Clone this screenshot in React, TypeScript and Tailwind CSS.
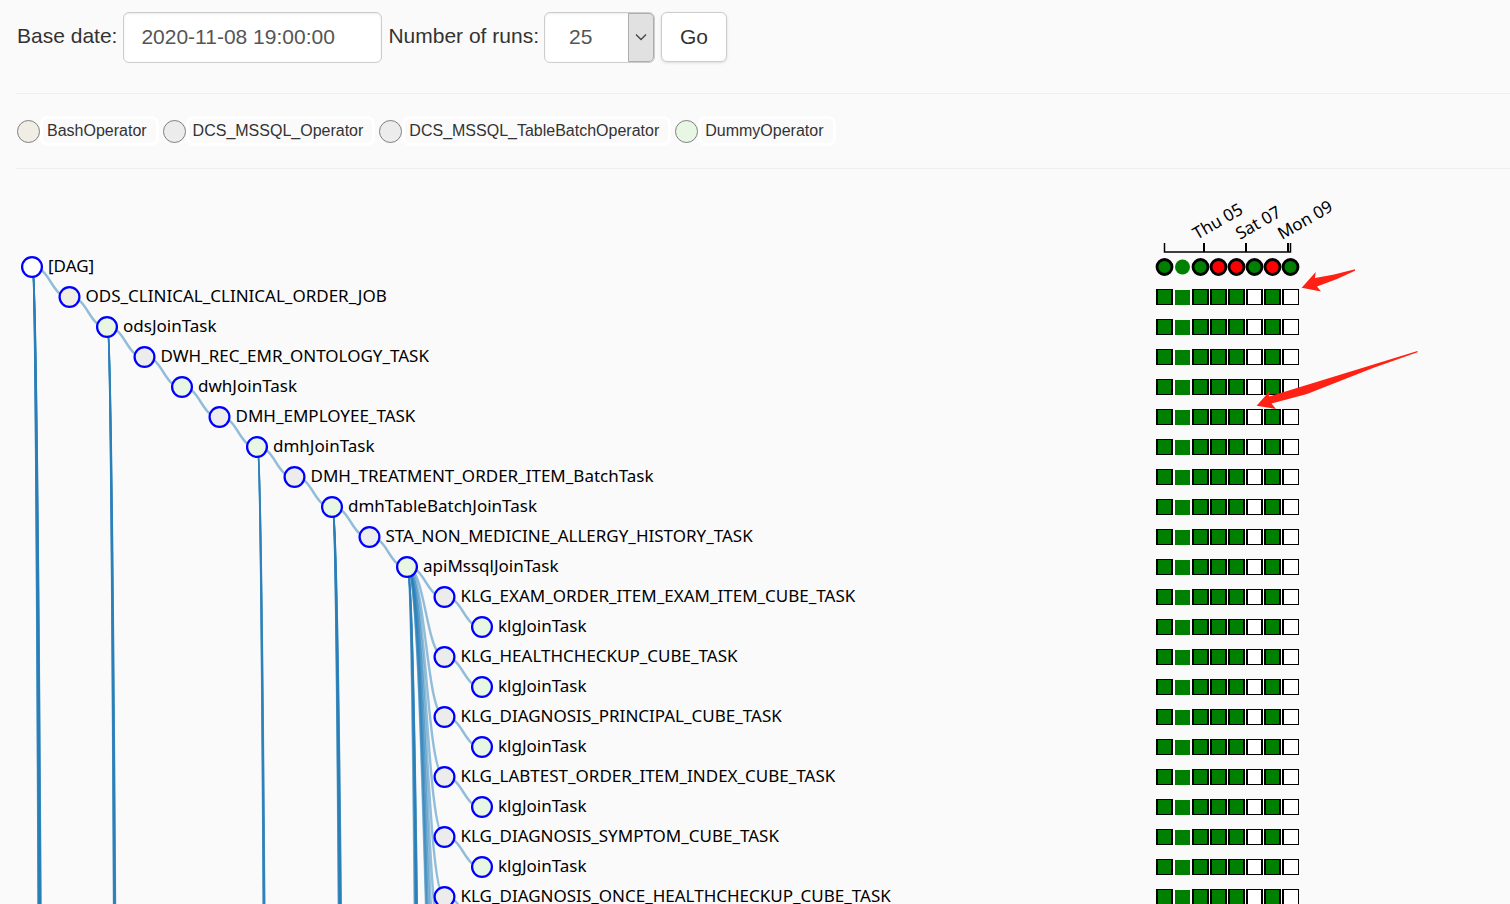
const STEP_X = 37.5;
const STEP_Y = 30;

const OPERATORS = [
  { name: 'BashOperator', swatch: 'bg-[#f0ede4]' },
  { name: 'DCS_MSSQL_Operator', swatch: 'bg-[#ececec]' },
  { name: 'DCS_MSSQL_TableBatchOperator', swatch: 'bg-[#ececec]' },
  { name: 'DummyOperator', swatch: 'bg-[#e8f7e4]' },
];

const BASH = '#f0ede4';
const MSSQL = '#ececec';
const DUMMY = '#e8f7e4';

type Task = { name: string; depth: number; fill: string };

const TASKS: Task[] = [
  { name: '[DAG]', depth: 0, fill: '#ffffff' },
  { name: 'ODS_CLINICAL_CLINICAL_ORDER_JOB', depth: 1, fill: BASH },
  { name: 'odsJoinTask', depth: 2, fill: DUMMY },
  { name: 'DWH_REC_EMR_ONTOLOGY_TASK', depth: 3, fill: MSSQL },
  { name: 'dwhJoinTask', depth: 4, fill: DUMMY },
  { name: 'DMH_EMPLOYEE_TASK', depth: 5, fill: MSSQL },
  { name: 'dmhJoinTask', depth: 6, fill: DUMMY },
  { name: 'DMH_TREATMENT_ORDER_ITEM_BatchTask', depth: 7, fill: MSSQL },
  { name: 'dmhTableBatchJoinTask', depth: 8, fill: DUMMY },
  { name: 'STA_NON_MEDICINE_ALLERGY_HISTORY_TASK', depth: 9, fill: MSSQL },
  { name: 'apiMssqlJoinTask', depth: 10, fill: DUMMY },
  { name: 'KLG_EXAM_ORDER_ITEM_EXAM_ITEM_CUBE_TASK', depth: 11, fill: MSSQL },
  { name: 'klgJoinTask', depth: 12, fill: DUMMY },
  { name: 'KLG_HEALTHCHECKUP_CUBE_TASK', depth: 11, fill: MSSQL },
  { name: 'klgJoinTask', depth: 12, fill: DUMMY },
  { name: 'KLG_DIAGNOSIS_PRINCIPAL_CUBE_TASK', depth: 11, fill: MSSQL },
  { name: 'klgJoinTask', depth: 12, fill: DUMMY },
  { name: 'KLG_LABTEST_ORDER_ITEM_INDEX_CUBE_TASK', depth: 11, fill: MSSQL },
  { name: 'klgJoinTask', depth: 12, fill: DUMMY },
  { name: 'KLG_DIAGNOSIS_SYMPTOM_CUBE_TASK', depth: 11, fill: MSSQL },
  { name: 'klgJoinTask', depth: 12, fill: DUMMY },
  { name: 'KLG_DIAGNOSIS_ONCE_HEALTHCHECKUP_CUBE_TASK', depth: 11, fill: MSSQL },
];

// Rows spanned by links that run to siblings further down the tree.
const LONG_LINKS: { row: number; spans: number[] }[] = [
  { row: 0, spans: [250, 260, 270, 285, 305, 320, 340, 370, 400, 430, 460, 480] },
  { row: 2, spans: [255, 265, 280, 300, 315, 330, 345, 370] },
  { row: 6, spans: [250, 265, 280, 295, 310, 330] },
  { row: 8, spans: [145, 150, 160, 170, 180, 195, 210, 230, 250, 270] },
  { row: 10, spans: [13, 15, 17, 19, 21, 22, 95, 98, 101, 106, 112, 120, 150, 170] },
  { row: 21, spans: [1] },
];

const RUNS = [
  { state: 'success', scheduled: true },
  { state: 'success', scheduled: false },
  { state: 'success', scheduled: true },
  { state: 'failed', scheduled: true },
  { state: 'failed', scheduled: true },
  { state: 'success', scheduled: true },
  { state: 'failed', scheduled: true },
  { state: 'success', scheduled: true },
];
const EMPTY_RUNS = [5, 7];

const nodeX = (depth: number) => 32 + depth * STEP_X;
const nodeY = (row: number) => 83 + row * STEP_Y;

function linkPath(depth: number, row: number, span: number) {
  const x0 = nodeX(depth);
  const y0 = nodeY(row);
  const x1 = x0 + STEP_X;
  const y1 = y0 + span * STEP_Y;
  const mid = (x0 + x1) / 2;
  return `M${x0},${y0}C${mid},${y0} ${mid},${y1} ${x1},${y1}`;
}

function parentRow(row: number) {
  let r = row - 1;
  while (TASKS[r].depth >= TASKS[row].depth) r -= 1;
  return r;
}

function Links() {
  return (
    <g fill="none" stroke="#2a7fba" strokeWidth="2.4" strokeOpacity="0.5">
      {TASKS.map((task, row) => {
        if (row === 0) return null;
        const parent = parentRow(row);
        return <path key={row} d={linkPath(TASKS[parent].depth, parent, row - parent)} />;
      })}
      {LONG_LINKS.map(({ row, spans }) =>
        spans.map((span) => <path key={`${row}-${span}`} d={linkPath(TASKS[row].depth, row, span)} />),
      )}
    </g>
  );
}

function TaskNode({ task, row }: { task: Task; row: number }) {
  const x = nodeX(task.depth);
  const y = nodeY(row);
  return (
    <g>
      <circle cx={x} cy={y} r="9.9" fill={task.fill} stroke="#0000ff" strokeWidth="2.25" />
      <text x={x + 16} y={y + 5}>{task.name}</text>
    </g>
  );
}

function RunRow({ row }: { row: number }) {
  const y = nodeY(row);
  return (
    <g>
      {RUNS.map((run, i) => {
        const left = 1156 + i * 18;
        if (row === 0) {
          return (
            <circle
              key={i}
              cx={left + 8.5}
              cy={y}
              r="7.5"
              fill={run.state === 'failed' ? '#ff0000' : '#008000'}
              stroke={run.scheduled ? '#000000' : 'none'}
              strokeWidth="2.8"
            />
          );
        }
        if (!run.scheduled) {
          return <rect key={i} x={left + 1} y={y - 7} width="15" height="15" fill="#008000" />;
        }
        const last = i === RUNS.length - 1;
        return (
          <g key={i}>
            <rect x={left} y={y - 8} width="17" height="16" fill="#000000" />
            <rect
              x={left + 2}
              y={y - 7}
              width={last ? 14 : 13}
              height="14"
              fill={EMPTY_RUNS.includes(i) ? '#ffffff' : '#008000'}
            />
          </g>
        );
      })}
    </g>
  );
}

function TimeAxis() {
  return (
    <g>
      <path d="M1164.5 59V68H1290.5V59" fill="none" stroke="#000" strokeWidth="1.5" />
      <path d="M1204 59V68M1246 59V68M1288 59V68" stroke="#000" strokeWidth="2" />
      <text transform="translate(1197 56) rotate(-30)">Thu 05</text>
      <text transform="translate(1240 56) rotate(-30)">Sat 07</text>
      <text transform="translate(1282 56) rotate(-30)">Mon 09</text>
    </g>
  );
}

function TreeChart() {
  return (
    <svg
      className="block h-full w-full overflow-hidden font-['Noto_Sans',sans-serif] text-[17px]"
      role="img"
      aria-label="Task tree"
    >
      <Links />
      {TASKS.map((task, row) => (
        <TaskNode key={row} task={task} row={row} />
      ))}
      <TimeAxis />
      {TASKS.map((_, row) => (
        <RunRow key={row} row={row} />
      ))}
      <g fill="#ff2113">
        <path d="M1301.7 103.7L1315.7 88L1315 94L1333 90.7L1355 85.3V86.7L1337 95L1317 102.5L1321 107.5Z" />
        <path d="M1256.7 221.7L1270 206.5L1269 212.5L1417.5 167V168.3L1373 184L1307 210L1271.5 219.5L1276 225Z" />
      </g>
    </svg>
  );
}

export default function App() {
  return (
    <div className="flex h-screen flex-col overflow-hidden bg-[#fafafa] font-['Liberation_Sans',Arial,sans-serif] text-[#333]">
      <form className="ml-[17px] flex items-start pt-3 text-[21px] leading-6" onSubmit={(e) => e.preventDefault()}>
        <label htmlFor="base-date" className="mr-1.5 flex h-12 items-center">Base date:</label>
        <input
          id="base-date"
          type="text"
          defaultValue="2020-11-08 19:00:00"
          className="mr-1.5 h-[51px] w-[259px] rounded-md border border-[#ccc] bg-white px-[17px] pb-0.5 text-[#555] shadow-[inset_0_1px_2px_rgba(0,0,0,0.08)]"
        />
        <label htmlFor="runs" className="mr-[5px] flex h-12 items-center">Number of runs:</label>
        <div className="relative mr-1.5 flex">
          <select
            id="runs"
            defaultValue="25"
            className="h-[51px] w-[111px] appearance-none rounded-md border border-[#ccc] bg-white pb-0.5 pl-6 text-[#555] shadow-[inset_0_1px_2px_rgba(0,0,0,0.08)]"
          >
            <option>5</option>
            <option>25</option>
            <option>50</option>
            <option>100</option>
          </select>
          <span className="pointer-events-none absolute inset-y-px right-px flex w-[26px] items-center justify-center rounded-r-[5px] border border-[#adadad] bg-[#e1e1e1] pb-0.5">
            <svg width="12" height="8" viewBox="0 0 12 8" fill="none" stroke="#444" strokeWidth="1.3">
              <path d="M1 1.5L6 6.5L11 1.5" />
            </svg>
          </span>
        </div>
        <button
          type="submit"
          className="h-[50px] w-[66px] rounded-md border border-[#ccc] bg-white shadow-[0_1px_3px_rgba(0,0,0,0.12)]"
        >
          Go
        </button>
      </form>

      <hr className="ml-4 mt-[30px] border-[#eee]" />

      <ul className="ml-[17px] mt-[22px] flex gap-1 text-[16px] leading-6">
        {OPERATORS.map((op) => (
          <li key={op.name} className="flex items-center">
            <span className={`size-[23px] rounded-full border border-[#808080] ${op.swatch}`} />
            <span className="rounded-lg border-[3px] border-white pl-1 pr-[9px]">{op.name}</span>
          </li>
        ))}
      </ul>

      <hr className="ml-4 mt-[22px] border-[#eee]" />

      <main className="mt-[15px] min-h-0 flex-1">
        <TreeChart />
      </main>
    </div>
  );
}
